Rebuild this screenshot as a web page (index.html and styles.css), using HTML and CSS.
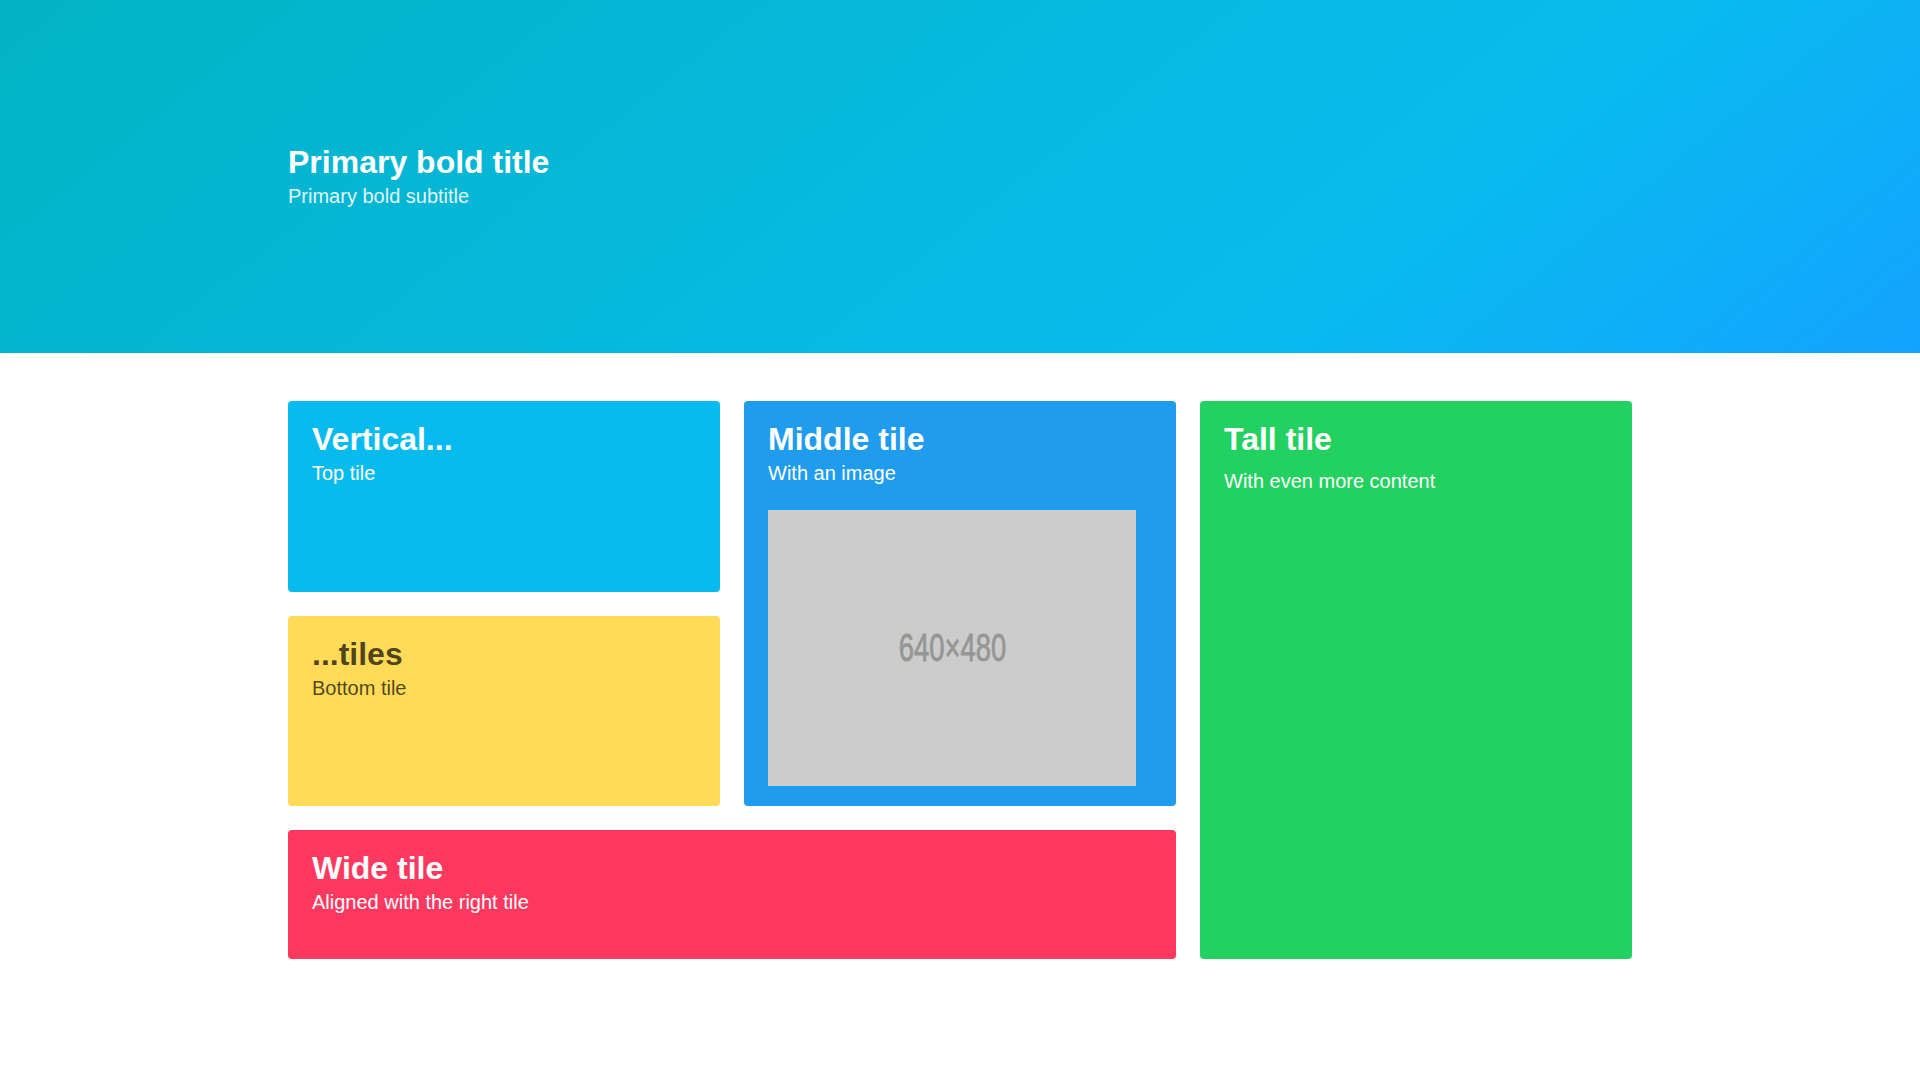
FILE: index.html
```html
<!DOCTYPE html>
<html lang="en">
<head>
<meta charset="utf-8">
<title>Tiles</title>
<link rel="stylesheet" href="styles.css">
</head>
<body>
<section class="hero">
  <div class="hero-body">
    <div class="container">
      <h1 class="title">Primary bold title</h1>
      <h2 class="subtitle">Primary bold subtitle</h2>
    </div>
  </div>
</section>
<section class="section">
  <div class="container">
    <div class="tiles">
      <article class="tile tile-top is-cyan">
        <p class="title">Vertical...</p>
        <p class="subtitle">Top tile</p>
      </article>
      <article class="tile tile-bottom is-yellow">
        <p class="title">...tiles</p>
        <p class="subtitle">Bottom tile</p>
      </article>
      <article class="tile tile-middle is-blue">
        <p class="title">Middle tile</p>
        <p class="subtitle spaced">With an image</p>
        <figure class="placeholder"><span class="ph-text">640×480</span></figure>
      </article>
      <article class="tile tile-wide is-red">
        <p class="title">Wide tile</p>
        <p class="subtitle spaced">Aligned with the right tile</p>
        <div class="content"></div>
      </article>
      <article class="tile tile-tall is-green">
        <p class="title title-content">Tall tile</p>
        <p class="subtitle spaced">With even more content</p>
        <div class="content"></div>
      </article>
    </div>
  </div>
</section>
</body>
</html>
```
FILE: styles.css
```css
* { box-sizing: border-box; }
html, body { margin: 0; padding: 0; background: #ffffff; }
body {
  font-family: "Liberation Sans", Arial, Helvetica, sans-serif;
  font-size: 16px;
  line-height: 1.5;
  color: #4a4a4a;
}
h1, h2, p, figure { margin: 0; }

.container {
  width: 1344px;
  margin: 0 auto;
}

.hero {
  background-image: linear-gradient(141deg, #03b3c4 0%, #09bbee 71%, #13a3ff 100%);
  color: #ffffff;
}
.hero-body {
  padding: 144px 24px;
}

.title {
  font-size: 32px;
  font-weight: 700;
  line-height: 1.125;
  margin-bottom: 4px;
}
.subtitle {
  font-size: 20px;
  font-weight: 400;
  line-height: 1.25;
}
.hero .title { color: #ffffff; }
.hero .subtitle { color: rgba(255, 255, 255, 0.9); }

.section {
  padding: 48px 24px;
}

.tiles {
  display: grid;
  grid-template-columns: repeat(3, 1fr);
  grid-template-rows: auto auto auto;
  gap: 24px;
}

.tile {
  border-radius: 4px;
  padding: 20px 40px 20px 24px;
  color: #ffffff;
}
.tile-top { grid-column: 1; grid-row: 1; }
.tile-bottom { grid-column: 1; grid-row: 2; }
.tile-middle { grid-column: 2; grid-row: 1 / span 2; }
.tile-wide { grid-column: 1 / span 2; grid-row: 3; }
.tile-tall { grid-column: 3; grid-row: 1 / span 3; }

.is-cyan { background: #08bbee; }
.is-yellow { background: #ffdb57; color: rgba(0, 0, 0, 0.7); }
.is-blue { background: #209cee; }
.is-red { background: #ff3860; }
.is-green { background: #23d160; }

.tile .title, .tile .subtitle { color: currentColor; }
.title-content { margin-bottom: 12px; }
.subtitle.spaced { margin-bottom: 24px; }

.placeholder {
  width: 100%;
  aspect-ratio: 4 / 3;
  background: #cccccc;
  display: flex;
  align-items: center;
  justify-content: center;
}
.ph-text {
  display: inline-block;
  font-family: "Liberation Sans", Arial, sans-serif;
  font-size: 38px;
  font-weight: 400;
  line-height: 1;
  color: #969696;
  -webkit-text-stroke: 0.8px #969696;
  transform: scaleX(0.72);
  letter-spacing: 0;
}
```
